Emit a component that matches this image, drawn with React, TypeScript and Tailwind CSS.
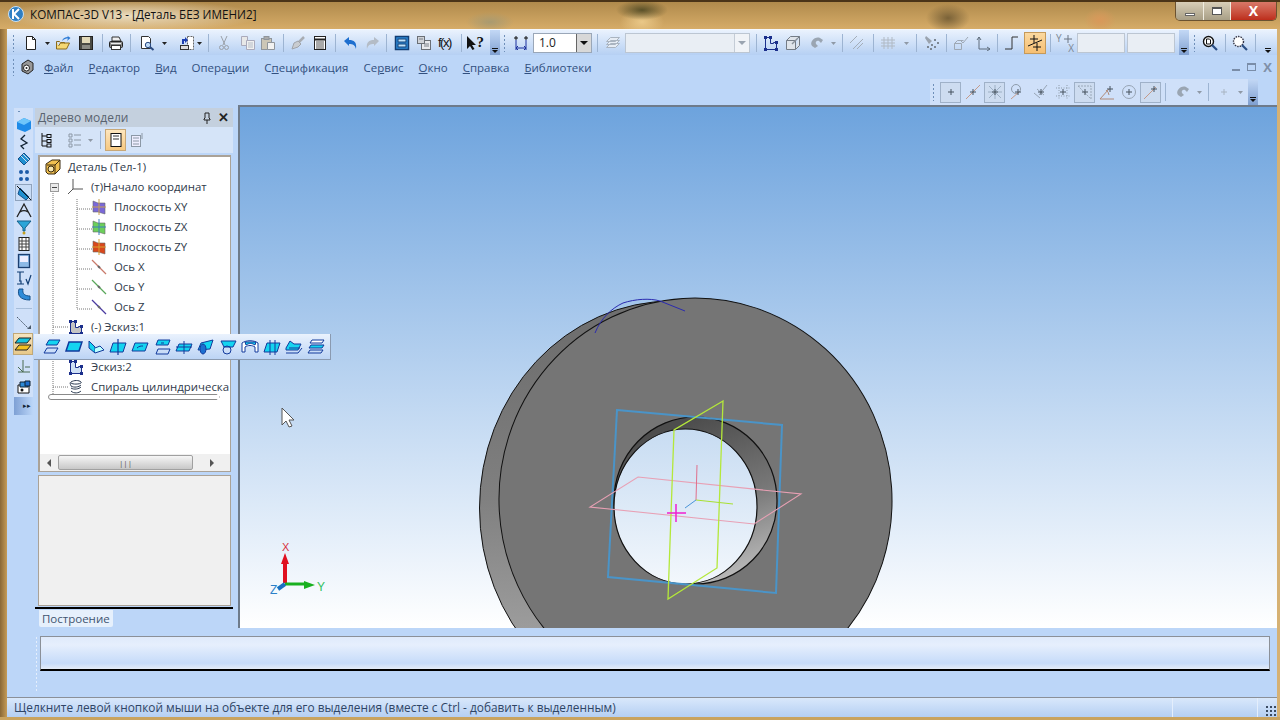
import React from 'react';

const font = { fontFamily: '"Open Sans", "Liberation Sans", sans-serif' };

const S = ({ className = '', w = 16, h = 16, children }: { className?: string; w?: number; h?: number; children?: React.ReactNode }) => (
  <svg width={w} height={h} viewBox={`0 0 ${w} ${h}`} className={`shrink-0 ${className}`} fill="none">
    {children}
  </svg>
);

type P = { className?: string };

const Grip = ({ className = '' }: P) => (
  <div className={`w-[3px] h-[18px] shrink-0 bg-[radial-gradient(circle,#6f8fb8_1px,transparent_1px)] bg-[length:3px_4px] ${className}`} />
);
const Sep = ({ className = '' }: P) => <div className={`w-px h-[18px] shrink-0 bg-[#9db4d2] ${className}`} />;
const Dd = ({ className = '', gray = false }: P & { gray?: boolean }) => (
  <S w={5} h={16} className={className}>
    <path d="M0 7h5L2.5 10z" fill={gray ? '#8f99a6' : '#222'} />
  </S>
);
const Chev = ({ className = '' }: P) => (
  <div className={`w-[10px] h-[26px] shrink-0 flex flex-col items-center justify-end pb-[3px] bg-gradient-to-b from-[#c3d8f5] to-[#7f9fd0] ${className}`}>
    <div className="w-[6px] h-px bg-[#111] mb-px" />
    <div className="w-0 h-0 border-x-[3px] border-x-transparent border-t-[3px] border-t-[#111]" />
  </div>
);

const NewDoc = ({ className }: P) => (
  <S className={className}>
    <path d="M3.5 1.5h6l3 3v10h-9z" fill="#fff" stroke="#222" />
    <path d="M9.5 1.5v3h3" stroke="#222" />
  </S>
);
const OpenIco = ({ className }: P) => (
  <S className={className}>
    <path d="M1.5 6.5v7.500h10l3-6h-9l-2 3" fill="#f5d873" stroke="#8a6a1c" />
    <path d="M1.5 6.5h3l1 1h4v1" fill="#e8c050" stroke="#8a6a1c" />
    <path d="M7 6c1-3 3-4 6-4l-1-1.500 3.500 2.500-3.500 3 1-2.500c-2 0-4 .5-6 2.500z" fill="#2c7bd6" />
  </S>
);
const SaveIco = ({ className }: P) => (
  <S className={className}>
    <rect x="1.500" y="1.500" width="13" height="13" fill="#4a4a44" stroke="#222" />
    <rect x="4" y="2" width="8" height="6" fill="#e2d9b8" />
    <rect x="4" y="10" width="8" height="4" fill="#8a8a84" />
  </S>
);
const PrintIco = ({ className }: P) => (
  <S className={className}>
    <path d="M4 2h7l2 4H4z" fill="#eee" stroke="#333" />
    <rect x="1.500" y="6.500" width="13" height="6" rx="1" fill="#888" stroke="#222" />
    <rect x="3.500" y="10.500" width="9" height="4" fill="#fff" stroke="#333" />
    <path d="M3 8.500h10" stroke="#eee" />
  </S>
);
const PreviewIco = ({ className }: P) => (
  <S className={className}>
    <path d="M2.500 1.500h7l2 2v10h-9z" fill="#fff" stroke="#333" />
    <circle cx="9" cy="10" r="2.700" fill="#bcd8f5" stroke="#2a4a80" />
    <path d="M11 12l3.500 3" stroke="#2a4a80" strokeWidth="2" />
  </S>
);
const PageIco = ({ className }: P) => (
  <S className={className}>
    <path d="M8.500 1.500h6v13h-6z" fill="#fff" stroke="#666" strokeDasharray="2 1" />
    <rect x="1.500" y="10.500" width="8" height="4" fill="#ddd" stroke="#333" />
    <path d="M3 9V4h3V2l3 3-3 3V6H5v3z" fill="#1d3fb0" />
  </S>
);
const CutIco = ({ className }: P) => (
  <S className={className}>
    <path d="M5 1l4 9M11 1l-4 9" stroke="#9aa0a8" />
    <circle cx="5.500" cy="12.500" r="2" stroke="#9aa0a8" />
    <circle cx="10.500" cy="12.500" r="2" stroke="#9aa0a8" />
  </S>
);
const CopyIco = ({ className }: P) => (
  <S className={className}>
    <path d="M1.500 1.500h6v9h-6z" fill="#e8e8e8" stroke="#aab" />
    <path d="M6.500 5.500h8v9h-8z" fill="#f0f0f0" stroke="#aab" />
    <path d="M8 8h5M8 10h5M8 12h5" stroke="#b5bcc6" />
  </S>
);
const PasteIco = ({ className }: P) => (
  <S className={className}>
    <rect x="1.500" y="3.500" width="10" height="11" fill="#ccc6b6" stroke="#8f959c" />
    <rect x="4" y="1.500" width="5" height="3" fill="#aaa" stroke="#8f959c" />
    <path d="M7.500 7.500h7v7h-7z" fill="#f2f2f2" stroke="#8f959c" />
  </S>
);
const BrushIco = ({ className }: P) => (
  <S className={className}>
    <path d="M14 2L8 8" stroke="#a9adb3" strokeWidth="2.500" />
    <path d="M8 6l3 3-3 3-6 2 2-6z" fill="#c9ccd0" stroke="#a0a4aa" />
  </S>
);
const TableIco = ({ className }: P) => (
  <S className={className}>
    <rect x="2.500" y="1.500" width="11" height="13" fill="#fff" stroke="#222" />
    <path d="M2.500 4.500h11" stroke="#222" strokeWidth="2" />
    <path d="M4 7h8M4 9h8M4 11h8M4 13h8" stroke="#555" />
  </S>
);
const UndoIco = ({ className, c = '#1e6fcf' }: P & { c?: string }) => (
  <S className={className}>
    <path d="M1 6l5-4v3c5 0 8 2 7 9-1-4-3-5-7-5v2z" fill={c} />
  </S>
);
const RedoIco = ({ className }: P) => (
  <S className={className}>
    <path d="M15 6l-5-4v3C5 5 2 7 3 14c1-4 3-5 7-5v2z" fill="#b4bcc6" />
  </S>
);
const BlueDoc = ({ className }: P) => (
  <S className={className}>
    <rect x="1.500" y="1.500" width="13" height="13" fill="#2e8bd8" stroke="#123e74" strokeWidth="1.500" />
    <rect x="4" y="4" width="8" height="3" fill="#bfe2fa" stroke="#123e74" />
    <rect x="4" y="9" width="8" height="3" fill="#bfe2fa" stroke="#123e74" />
  </S>
);
const GrayDoc = ({ className }: P) => (
  <S className={className}>
    <rect x="5.500" y="5.500" width="9" height="9" fill="#e8eaee" stroke="#6a6f76" />
    <rect x="1.500" y="1.500" width="7" height="7" fill="#d0d3d8" stroke="#6a6f76" />
    <path d="M3 4h4M8 9h5M8 11h5" stroke="#7b8088" />
  </S>
);
const HelpIco = ({ className }: P) => (
  <div className={`relative w-[18px] h-4 shrink-0 ${className}`}>
    <S className="absolute left-0 top-0">
      <path d="M1 1v13l3-3 2.500 4 2-1-2.500-4h4z" fill="#111" />
    </S>
    <span className="absolute right-0 -top-[3px] text-[15px] font-bold text-[#111] leading-[20px]" style={{ fontFamily: '"Liberation Serif", serif' }}>?</span>
  </div>
);
const DimIco = ({ className }: P) => (
  <S className={className}>
    <path d="M3 1v4M1 3h4M13 1v4M11 3h4" stroke="#111" />
    <path d="M3 5v10M13 5v10" stroke="#1a2f9c" />
    <path d="M3 13h10M3 13l2-2M3 13l2 2M13 13l-2-2M13 13l-2 2" stroke="#1a2f9c" />
  </S>
);
const LayersIco = ({ className }: P) => (
  <S className={className}>
    <path d="M1.500 6.500l4-4h9l-4 4z M1.500 9.500l4-4h9l-4 4z M1.500 12.500l4-4h9l-4 4z" stroke="#aab4c0" fill="#e6ecf4" />
  </S>
);
const SketchIco = ({ className, fill = 'none' }: P & { fill?: string }) => (
  <S className={className}>
    <path d="M2.500 2.500h5v6h3v-1h3v7h-11z" fill={fill} stroke="#1b2f8c" />
    <g fill="#1b2f8c">
      <rect x="1" y="1" width="3" height="3" /><rect x="6" y="1" width="3" height="3" /><rect x="12" y="6" width="3" height="3" />
      <rect x="1" y="13" width="3" height="3" /><rect x="12" y="13" width="3" height="3" />
    </g>
  </S>
);
const BoxIco = ({ className }: P) => (
  <S className={className}>
    <path d="M1.500 5.500h9v9h-9zM1.500 5.500l4-4h9l-4 4M14.500 1.500v9l-4 4" stroke="#747c86" fill="#dfe4ea" />
    <path d="M7 9l6-6" stroke="#8a929c" strokeWidth="1.500" />
  </S>
);
const MagnetIco = ({ className }: P) => (
  <S className={className}>
    <path d="M3 11c-3-4 3-10 8-8l3 2-2 3-2-2c-2-1-4 1-3 3l2 2-3 2z" fill="#9aa5b2" />
  </S>
);
const ParallelIco = ({ className }: P) => (
  <S className={className}>
    <path d="M1 8l7-7M4 14l10-10M8 14l6-6" stroke="#a4adb8" />
  </S>
);
const GridIco = ({ className }: P) => (
  <S className={className}>
    <path d="M4 2v12M8 2v12M12 2v12M1 5h14M1 8h14M1 11h14" stroke="#b0b9c4" />
  </S>
);
const SnapGray = ({ className }: P) => (
  <S className={className}>
    <path d="M2 1l6 5-3 3-4-6z" fill="#9aa3ae" />
    <g fill="#7d8792"><rect x="10" y="4" width="2" height="2" /><rect x="13" y="7" width="2" height="2" /><rect x="7" y="9" width="2" height="2" /><rect x="10" y="11" width="2" height="2" /><rect x="3" y="11" width="2" height="2" /><rect x="6" y="13" width="2" height="2" /></g>
  </S>
);
const CubeCheck = ({ className }: P) => (
  <S className={className}>
    <path d="M1.500 8.500h7v6h-7zM1.500 8.500l3-3h6" stroke="#9ea8b4" />
    <path d="M8 6l2 2 5-6" stroke="#9ea8b4" />
  </S>
);
const AxisIco = ({ className }: P) => (
  <S className={className}>
    <path d="M4 14V2M4 2L2 5M4 2l2 3M4 14h11M15 14l-3-2M15 14l-3 2" stroke="#5f6d7c" />
  </S>
);
const StepIco = ({ className }: P) => (
  <S className={className}>
    <path d="M1 14h7V2h6" stroke="#333" />
  </S>
);
const Cross = ({ x, y, c = '#111', r = 3 }: { x: number; y: number; c?: string; r?: number }) => (
  <path d={`M${x} ${y - r - 1}v${2 * r + 2}M${x - r - 1} ${y}h${2 * r + 2}`} stroke={c} />
);
const SelSnap = ({ className }: P) => (
  <div className={`w-[22px] h-[22px] shrink-0 flex items-center justify-center border border-[#c59a5a] bg-gradient-to-b from-[#fbd9a0] to-[#f6bf72] ${className}`}>
    <S>
      <path d="M1 11l14-6" stroke="#111" />
      <Cross x={7} y={4} /><Cross x={10} y={12} />
    </S>
  </div>
);
const YX = ({ className }: P) => (
  <div className={`relative w-[18px] h-5 shrink-0 text-[10px] leading-[10px] text-[#7b8794] ${className}`}>
    <span className="absolute left-0 top-0">Y</span>
    <span className="absolute right-0 top-[10px]">X</span>
    <S className="absolute left-[2px] top-0"><Cross x={10} y={6} c="#6a7482" /></S>
  </div>
);
const ZoomIco = ({ className, dash = false }: P & { dash?: boolean }) => (
  <S className={className}>
    <circle cx="6.500" cy="6.500" r="5" fill="#fff" stroke={dash ? '#334' : '#111'} strokeDasharray={dash ? '1.500 1' : undefined} strokeWidth="1.400" />
    {!dash && <path d="M4.500 4h3l1 1v4h-4z" stroke="#111" />}
    <path d="M10 10l5 5" stroke="#2a4f86" strokeWidth="2.200" />
  </S>
);

// snap toolbar drawings
const Snap = ({ kind, className }: P & { kind: number }) => (
  <S className={className}>
    {kind === 1 && <path d="M1 15L15 1" stroke="#c49a88" />}
    {kind === 2 && <path d="M2 2l12 12M14 2L2 14M1 8h14M8 1v14" stroke="#9db0c4" />}
    {kind === 3 && <><circle cx="6" cy="5" r="4.500" stroke="#8e9baa" /><path d="M1 15l8-7" stroke="#c49a88" /></>}
    {kind === 4 && <path d="M1 9l6 5M4 5l7 6M14 1L6 11" stroke="#97a4b4" />}
    {kind === 5 && <path d="M1 4h14M1 12h14M4 1v14M12 1v14" stroke="#8f9cab" strokeDasharray="1 1.500" />}
    {kind === 6 && <path d="M1 2h13v13M1 2l13 13" stroke="#9aa8b8" strokeDasharray="2 1" />}
    {kind === 7 && <path d="M1 15h14M1 15l9-10M10 11a7 7 0 0 0-3-5" stroke="#b08a78" />}
    {kind === 8 && <circle cx="8" cy="8" r="6.500" stroke="#97a4b4" />}
    {kind === 9 && <path d="M1 15L13 3" stroke="#c49a88" />}
    <Cross x={kind === 7 || kind === 9 ? 11 : 8} y={kind === 7 || kind === 9 ? 5 : 8} c="#46525f" r={2} />
  </S>
);
const SnapBtn = ({ kind, on = false, className = '' }: P & { kind: number; on?: boolean }) => (
  <div className={`w-[21px] h-[21px] shrink-0 flex items-center justify-center border ${on ? 'border-[#9fb1c8] bg-[#cddcf0]' : 'border-transparent'} ${className}`}>
    <Snap kind={kind} />
  </div>
);

// plane icons of the flyout
const Plane = ({ v }: { v: number }) => {
  const o = '#123a9c';
  const c = '#14d4f0';
  const shapes: Record<number, React.ReactNode> = {
    0: <><path d="M3 7l3-5h11l-3 5z" fill={c} stroke={o} /><path d="M1 15l3-5h11l-3 5z" stroke={o} /></>,
    1: <path d="M1 13l3-9h13l-3 9z" fill={c} stroke={o} strokeWidth="1.500" />,
    2: <><path d="M2 3l6 6v6l-6-5z" fill={c} stroke={o} /><path d="M8 15l9-3-4-4-5 2" fill="#bff" stroke={o} /></>,
    3: <><path d="M1 14l3-9h13l-3 9z" fill={c} stroke={o} /><path d="M9 1v16" stroke={o} strokeWidth="1.200" /></>,
    4: <path d="M1 13l3-8h13l-3 8z M6 10c2-2 4-2 6-2" fill={c} stroke={o} />,
    5: <><path d="M3 7l2-5h12l-2 5z" fill={c} stroke={o} /><path d="M3 16l2-5h12l-2 5z M8 5h3" stroke={o} /></>,
    6: <><path d="M1 13l3-7h13l-3 7z" fill={c} stroke={o} /><path d="M1 9h16M9 3v13" stroke={o} /></>,
    7: <><path d="M1 12l3-7 12-3-3 9z" fill={c} stroke={o} /><ellipse cx="6" cy="11" rx="3" ry="5" fill="#1c6fd0" stroke={o} /></>,
    8: <><path d="M2 3h15l-3 6H5z" fill={c} stroke={o} /><circle cx="8" cy="12" r="4" stroke={o} /></>,
    9: <><path d="M1 14V5c4-3 12-3 16 0v9h-3V9c-3-2-7-2-10 0v5z" stroke={o} fill="#fff" /><path d="M5 7c3-2 6-2 9 0l1-3H4z" fill={c} stroke={o} /></>,
    10: <><path d="M1 14l3-9h13l-3 9z" fill={c} stroke={o} /><path d="M7 2v15M12 2v15" stroke={o} /></>,
    11: <><path d="M1 10l4-7 4 3 7 0-3 6H1z" fill={c} stroke={o} /><path d="M1 15h12l4-5" stroke={o} /><path d="M4 10h11" stroke={o} /></>,
    12: <><path d="M3 5l2-3h12l-2 3z" fill="#fff" stroke={o} /><path d="M2 10l2-3h13l-2 3z" fill={c} stroke={o} /><path d="M1 15l2-3h13l-2 3z" stroke={o} /></>,
  };
  return <S w={18} h={18} className="shrink-0 mx-[2px]">{shapes[v]}</S>;
};

// left vertical bar drawings
const Cube = () => (
  <S>
    <path d="M1 5l7-4 7 3v8l-6 3-8-3z" fill="#1e8be8" />
    <path d="M1 5l7 3 7-4-7-3z" fill="#6fc6fa" />
  </S>
);
const Side = ({ n }: { n: number }) => (
  <S>
    {n === 1 && <path d="M9 1L5 5l6 4-6 3 3 3" stroke="#123" strokeWidth="1.300" />}
    {n === 2 && <><path d="M2 8l6-6 6 6-6 6z" fill="#1e8fd0" stroke="#14508a" /><path d="M5 5l6 6M7 3l6 6" stroke="#cde" /></>}
    {n === 3 && <g fill="#1d5ba8"><circle cx="5" cy="4" r="2" /><circle cx="11" cy="4" r="2" /><circle cx="5" cy="11" r="2" /><circle cx="11" cy="11" r="2" /></g>}
    {n === 4 && <><path d="M4 3l9 9-3 3-8-6z" fill="#1e8fd0" stroke="#14508a" /><path d="M1 1l14 14" stroke="#111" /></>}
    {n === 5 && <path d="M1 15L8 2l7 13M4 10c3-2 5-2 8 0" stroke="#222" strokeWidth="1.300" />}
    {n === 6 && <><path d="M1 2h14L9 9v3H7V9z" fill="#2aa5d8" stroke="#14608a" /><circle cx="8" cy="14" r="1.500" fill="#c4a020" /></>}
    {n === 7 && <><rect x="3" y="1.500" width="10" height="13" fill="#fff" stroke="#222" /><path d="M3 5h10M3 8h10M3 11h10M6 2v12M10 2v12" stroke="#444" /></>}
    {n === 8 && <><rect x="2.500" y="1.500" width="11" height="13" fill="#8db9e6" stroke="#1c3f70" strokeWidth="1.300" /><rect x="4" y="3" width="8" height="6" fill="#eef" /></>}
    {n === 9 && <path d="M1 2h7M4 2v9M1 14h7M3 11h2v3M10 9l2 5 3-9" stroke="#123e74" strokeWidth="1.200" />}
    {n === 10 && <path d="M3 2c-2 6 1 11 11 11v-4C9 9 6 7 7 2z" fill="#2e8bd8" stroke="#14508a" />}
    {n === 11 && <><path d="M1 2l12 12" stroke="#4a5a6c" strokeDasharray="2 1" /><path d="M11 14h4v-4z" fill="#4a5a6c" /></>}
    {n === 12 && <path d="M7 2v12M2 14h12M7 14L2 9M9 9h5" stroke="#4a6a50" />}
    {n === 13 && <><path d="M2 6h11v8H2z" fill="#fff" stroke="#111" /><path d="M4 3h8v5H4z" fill="#2e8bd8" stroke="#123" /><path d="M9 2h5v5H9z" fill="#1e6fcf" stroke="#123" /><circle cx="6" cy="11" r="1.500" fill="#111" /></>}
  </S>
);

const tree = [
  { t: 'Плоскость XY', c: ['#7a68d8', '#c8a050'] },
  { t: 'Плоскость ZX', c: ['#6ccf5a', '#3a7fc0'] },
  { t: 'Плоскость ZY', c: ['#d8481c', '#d8a030'] },
];

const PlaneNode = ({ c }: { c: string[] }) => (
  <S>
    <path d="M2 2l5 2h7v11l-7-2H2z" fill={c[0]} stroke="#6a6a6a" strokeWidth=".6" />
    <path d="M1 8h14" stroke={c[1]} />
    <path d="M8 0v16" stroke={c[1]} />
  </S>
);
const AxisNode = ({ c }: { c: string }) => (
  <S>
    <path d="M1 1l14 14" stroke={c} strokeWidth="1.300" />
    <path d="M7 7l2 2" stroke="#666" strokeWidth="2" />
  </S>
);

const Row = ({ pl, icon, children }: { pl: string; icon: React.ReactNode; children?: React.ReactNode }) => (
  <div className={`h-5 flex items-center gap-[7px] whitespace-nowrap ${pl}`}>
    {icon}
    <span className="text-[11.4px] text-[#2f3a4a] leading-5">{children}</span>
  </div>
);

const Menu = ({ className = '', children }: P & { children?: React.ReactNode }) => (
  <span className={`text-[11.5px] text-[#32507f] whitespace-nowrap ${className}`}>{children}</span>
);
const U = ({ children }: { children?: React.ReactNode }) => <span className="underline">{children}</span>;

export default function App() {
  return (
    <div className="w-[1280px] h-[720px] overflow-hidden flex flex-col bg-[#bcd6f8]" style={font}>
      {/* title bar */}
      <div className="h-[29px] shrink-0 flex items-start border-t-2 border-[#4a3418] bg-[radial-gradient(ellipse_26px_10px_at_642px_8px,#5a5028,transparent),radial-gradient(ellipse_22px_14px_at_948px_16px,#7a6238,transparent),radial-gradient(ellipse_16px_12px_at_1100px_18px,#d9985a,transparent),radial-gradient(ellipse_130px_16px_at_130px_14px,#eadcc0,transparent),radial-gradient(ellipse_24px_10px_at_490px_20px,#a99a70,transparent),radial-gradient(ellipse_22px_14px_at_642px_20px,#eac888,transparent),linear-gradient(180deg,#b08a4c,#d6ac68)]">
        <S w={16} h={16} className="ml-[8px] mt-[4px]">
          <circle cx="8" cy="8" r="7.500" fill="#2f7fc4" stroke="#c8e0f4" />
          <path d="M5 3v10M11 3L6 8l5 5" stroke="#fff" strokeWidth="2" />
        </S>
        <span className="ml-[6px] mt-[4px] text-[11.7px] leading-[16px] text-[#111] whitespace-nowrap">КОМПАС-3D V13 - [Деталь БЕЗ ИМЕНИ2]</span>
        <div className="ml-auto mr-[3px] flex h-[19px] rounded-b-[5px] border border-t-0 border-[#6b5230] overflow-hidden">
          <div className="w-[28px] flex items-center justify-center bg-gradient-to-b from-[#d8ceb8] to-[#a89f86] border-r border-[#f0ece0]">
            <div className="w-[10px] h-[3px] mt-[6px] bg-white border border-[#666]" />
          </div>
          <div className="w-[27px] flex items-center justify-center bg-gradient-to-b from-[#d8ceb8] to-[#a89f86] border-r border-[#f0ece0]">
            <div className="w-[10px] h-[8px] bg-white border border-t-2 border-[#555]" />
          </div>
          <div className="w-[45px] flex items-center justify-center bg-gradient-to-b from-[#d87868] to-[#bd2c1a] text-white text-[14px] font-bold leading-none">X</div>
        </div>
      </div>

      <div className="flex-1 flex min-h-0">
        <div className="w-[7px] shrink-0 bg-gradient-to-r from-[#8a6836] to-[#c59c58]" />
        <div className="flex-1 min-w-0 flex flex-col">
          {/* standard toolbar */}
          <div className="h-[26px] shrink-0 flex items-center overflow-hidden border-t border-[#f4f8fe] bg-gradient-to-b from-[#eaf2fd] to-[#b6d0f3]">
            <Grip className="ml-[5px]" />
            <NewDoc className="ml-[8px]" />
            <Dd className="ml-[6px]" />
            <OpenIco className="ml-[5px]" />
            <SaveIco className="ml-[7px]" />
            <Sep className="ml-[8px]" />
            <PrintIco className="ml-[5px]" />
            <Sep className="ml-[6px]" />
            <PreviewIco className="ml-[8px]" />
            <Dd className="ml-[7px]" />
            <PageIco className="ml-[12px]" />
            <Dd className="ml-[2px]" />
            <Sep className="ml-[6px]" />
            <CutIco className="ml-[7px]" />
            <CopyIco className="ml-[8px]" />
            <PasteIco className="ml-[4px]" />
            <Sep className="ml-[7px]" />
            <BrushIco className="ml-[6px]" />
            <TableIco className="ml-[6px]" />
            <Sep className="ml-[7px]" />
            <UndoIco className="ml-[7px]" />
            <RedoIco className="ml-[5px]" />
            <Sep className="ml-[6px]" />
            <BlueDoc className="ml-[7px]" />
            <GrayDoc className="ml-[6px]" />
            <span className="ml-[6px] w-4 shrink-0 text-[13px] text-[#111] tracking-[-1.5px] leading-4" style={{ fontFamily: '"Liberation Sans", sans-serif' }}>f(x)</span>
            <Sep className="ml-[7px]" />
            <HelpIco className="ml-[4px]" />
            <Chev className="ml-[6px]" />
            <Grip className="ml-[3px]" />
            <DimIco className="ml-[7px]" />
            <div className="ml-[4px] w-[59px] h-[20px] shrink-0 flex items-center justify-between bg-white border border-[#9aa7b8] text-[12px] text-[#222] pl-[5px]">
              1.0
              <div className="w-[15px] h-full flex items-center justify-center bg-[#d8d8d8] border-l border-[#666]">
                <div className="w-0 h-0 border-x-[4px] border-x-transparent border-t-[4px] border-t-[#111]" />
              </div>
            </div>
            <Sep className="ml-[5px]" />
            <LayersIco className="ml-[7px]" />
            <div className="ml-[4px] w-[125px] h-[20px] shrink-0 flex justify-end bg-[#e9eef4] border border-[#bcc6d2]">
              <div className="w-[15px] h-full flex items-center justify-center border-l border-[#c4ccd6] bg-[#f0f3f7]">
                <div className="w-0 h-0 border-x-[4px] border-x-transparent border-t-[4px] border-t-[#9aa4b0]" />
              </div>
            </div>
            <Sep className="ml-[6px]" />
            <SketchIco className="ml-[6px]" />
            <BoxIco className="ml-[6px]" />
            <MagnetIco className="ml-[8px]" />
            <Dd gray className="ml-[6px]" />
            <Sep className="ml-[6px]" />
            <ParallelIco className="ml-[6px]" />
            <Sep className="ml-[8px]" />
            <GridIco className="ml-[6px]" />
            <Dd gray className="ml-[8px]" />
            <Sep className="ml-[7px]" />
            <SnapGray className="ml-[7px]" />
            <Sep className="ml-[6px]" />
            <CubeCheck className="ml-[6px]" />
            <AxisIco className="ml-[6px]" />
            <Sep className="ml-[6px]" />
            <StepIco className="ml-[6px]" />
            <SelSnap className="ml-[4px]" />
            <Sep className="ml-[4px]" />
            <YX className="ml-[5px]" />
            <div className="ml-[3px] w-[48px] h-[20px] shrink-0 bg-[#e9eef4] border border-[#bcc6d2]" />
            <div className="ml-[2px] w-[48px] h-[20px] shrink-0 bg-[#e9eef4] border border-[#bcc6d2]" />
            <Chev className="ml-[4px]" />
            <Grip className="ml-[4px]" />
            <ZoomIco className="ml-[6px]" />
            <Sep className="ml-[7px]" />
            <ZoomIco dash className="ml-[6px]" />
            <Sep className="ml-[7px]" />
            <div className="ml-[8px] w-[8px] h-[26px] shrink-0 flex flex-col items-center justify-end pb-[3px]">
              <div className="w-[6px] h-px bg-[#111] mb-px" />
              <div className="w-0 h-0 border-x-[3px] border-x-transparent border-t-[3px] border-t-[#111]" />
            </div>
          </div>

          {/* menu + snap bar */}
          <div className="h-[50px] shrink-0 flex flex-col bg-[#bcd6f8]">
            <div className="h-6 flex items-center relative">
              <Grip className="ml-[5px] h-[16px]" />
              <S className="ml-[4px]">
                <path d="M3 5l6-4 5 3v7l-5 4-6-3z" fill="#999" stroke="#222" />
                <circle cx="7.500" cy="9" r="3" fill="#fff" stroke="#222" />
                <circle cx="7.500" cy="9" r="1" fill="#222" />
              </S>
              <Menu className="ml-[9px] mt-[1px]"><U>Ф</U>айл</Menu>
              <Menu className="ml-[15px] mt-[1px]"><U>Р</U>едактор</Menu>
              <Menu className="ml-[15px] mt-[1px]"><U>В</U>ид</Menu>
              <Menu className="ml-[15px] mt-[1px]">Опера<U>ц</U>ии</Menu>
              <Menu className="ml-[15px] mt-[1px]">С<U>п</U>ецификация</Menu>
              <Menu className="ml-[15px] mt-[1px]">Се<U>р</U>вис</Menu>
              <Menu className="ml-[15px] mt-[1px]"><U>О</U>кно</Menu>
              <Menu className="ml-[15px] mt-[1px]"><U>С</U>правка</Menu>
              <Menu className="ml-[15px] mt-[1px]"><U>Б</U>иблиотеки</Menu>
              <div className="ml-auto mr-[5px] flex items-center gap-[7px]">
                <div className="w-[8px] h-[2px] mt-[6px] bg-[#7a8da8]" />
                <div className="w-[9px] h-[8px] border border-t-2 border-[#7a8da8]" />
                <span className="text-[13px] font-bold leading-none text-[#8090a8]">X</span>
              </div>
            </div>
            <div className="h-[26px] flex justify-end">
              <div className="mr-[19px] w-[328px] flex items-center bg-[#cfe0f9]">
                <Grip className="ml-[2px]" />
                <SnapBtn on kind={0} className="ml-[5px]" />
                <SnapBtn kind={1} className="ml-[1px]" />
                <SnapBtn on kind={2} className="ml-[1px]" />
                <SnapBtn kind={3} className="ml-[2px]" />
                <SnapBtn kind={4} className="ml-[2px]" />
                <SnapBtn kind={5} className="ml-[1px]" />
                <SnapBtn on kind={6} className="ml-[1px]" />
                <SnapBtn kind={7} className="ml-[1px]" />
                <SnapBtn kind={8} className="ml-[1px]" />
                <SnapBtn on kind={9} className="ml-[1px]" />
                <Sep className="ml-[4px]" />
                <MagnetIco className="ml-[9px]" />
                <Dd gray className="ml-[6px]" />
                <Sep className="ml-[6px]" />
                <S className="ml-[7px]"><Cross x={8} y={8} c="#a8b4c2" r={2} /></S>
                <Dd gray className="ml-[6px]" />
                <Chev className="ml-[5px]" />
              </div>
            </div>
          </div>

          {/* workspace */}
          <div className="h-[523px] shrink-0 flex relative">
            <div className="w-[28px] shrink-0 pt-[3px] pl-[7px]">
              <div className="w-[19px] h-[307px] flex flex-col items-center bg-[#cfe0f9]">
                <div className="h-[8px] w-[14px] shrink-0 bg-[radial-gradient(circle,#6f8fb8_1px,transparent_1px)] bg-[length:4px_3px] bg-no-repeat bg-[position:0_2px]" />
                <div className="h-[17px] flex items-center"><Cube /></div>
                {[1, 2, 3, 4, 5, 6, 7, 8, 9, 10].map((n) => (
                  <div key={n} className={`h-[17px] w-[17px] shrink-0 flex items-center justify-center ${n === 4 ? 'border border-[#8fa3bd] bg-[#c8dcf6]' : ''}`}>
                    <Side n={n} />
                  </div>
                ))}
                <div className="w-[16px] h-px my-[5px] bg-[#a5bcd9]" />
                <div className="h-[17px] flex items-center"><Side n={11} /></div>
                <div className="h-[22px] w-[20px] shrink-0 mt-[2px] -ml-[2px] flex items-center justify-center border border-[#c0a878] bg-gradient-to-b from-[#f6e5c0] to-[#e8c888]">
                  <svg width="18" height="16" viewBox="0 0 18 16" fill="none">
                    <path d="M1 7l4-5h12l-4 5z" fill="#14c4e0" stroke="#222" />
                    <path d="M1 14l4-5h12l-4 5z" fill="#f2c020" stroke="#222" />
                  </svg>
                </div>
                <div className="h-[22px] flex items-center"><Side n={12} /></div>
                <div className="h-[20px] flex items-center"><Side n={13} /></div>
                <div className="w-full flex-1 bg-gradient-to-r from-[#7ea0d4] to-[#bcd6f8] flex items-center justify-end pr-[2px] text-[7px] text-[#123]">▸▸</div>
              </div>
            </div>

            {/* model tree panel */}
            <div className="w-[198px] shrink-0 pt-[3px] flex flex-col">
              <div className="h-[19px] shrink-0 flex items-center bg-[#c4d0de] pl-[3px] pr-[4px]">
                <span className="text-[12px] text-[#59636f]">Дерево модели</span>
                <S w={10} h={12} className="ml-auto">
                  <path d="M3 1h4v5l1 1v1H2V7l1-1zM5 8v4" stroke="#222" />
                </S>
                <span className="ml-[6px] text-[13px] leading-none font-bold text-[#222]">✕</span>
              </div>
              <div className="h-[26px] shrink-0 flex items-center bg-[#d5e4f8]">
                <S className="ml-[4px]">
                  <path d="M3 1v13M3 4h5M3 9h5M3 14h5" stroke="#111" />
                  <rect x="8" y="2.500" width="4" height="3" stroke="#111" /><rect x="8" y="7.500" width="4" height="3" stroke="#111" /><rect x="8" y="12" width="4" height="3" stroke="#111" />
                </S>
                <S className="ml-[12px]">
                  <path d="M2 2h3v3H2zM2 7h3v3H2zM2 12h3v3H2zM7 3h7M7 8h7M7 13h7" stroke="#8c98a6" />
                </S>
                <Dd gray className="ml-[5px]" />
                <Sep className="ml-[7px]" />
                <div className="ml-[4px] w-[21px] h-[22px] flex items-center justify-center border border-[#c8a878] bg-gradient-to-b from-[#fde6be] to-[#f6c880]">
                  <S>
                    <rect x="3" y="1.500" width="10" height="13" fill="#fff" stroke="#111" />
                    <path d="M5 4h6M5 7h6" stroke="#333" />
                  </S>
                </div>
                <S className="ml-[4px]">
                  <rect x="1.500" y="3.500" width="9" height="11" fill="#eef" stroke="#8c98a6" />
                  <path d="M3 6h6M3 9h6M3 12h6M12 1v6" stroke="#8c98a6" />
                </S>
              </div>
              <div className="h-[317px] shrink-0 ml-[3px] w-[193px] mt-[2px] flex flex-col bg-white border-2 border-[#aaa297] border-r border-b relative overflow-hidden">
                <svg width="193" height="260" viewBox="0 0 193 260" className="absolute left-0 top-0" fill="none">
                  <path d="M13 36v202M13 170h15M13 230h15M37 42v110M37 52h15M37 72h15M37 92h15M37 112h15M37 132h15M37 152h15" stroke="#777" strokeDasharray="1 1" />
                </svg>
                <div className="flex flex-col relative">
                  <Row pl="pl-[5px]" icon={
                    <S>
                      <path d="M1 5l6-4h8v9l-5 5H3l-2-2z" fill="#f0c050" stroke="#3a2a10" />
                      <path d="M10 15V6l5-5M10 6H2" stroke="#3a2a10" />
                      <circle cx="6" cy="10" r="3" fill="#f8e8b0" stroke="#3a2a10" />
                    </S>
                  }>Деталь (Тел-1)</Row>
                  <div className="h-5 flex items-center relative">
                    <div className="ml-[10px] w-[9px] h-[9px] shrink-0 bg-[#eaeaea] border border-[#9a9a9a] flex items-center justify-center">
                      <div className="w-[5px] h-px bg-[#444]" />
                    </div>
                    <S className="ml-[8px]"><path d="M6 0v10M6 10h10M6 10l-5 5" stroke="#555" /></S>
                    <span className="ml-[8px] text-[11.4px] text-[#2f3a4a] whitespace-nowrap">(т)Начало координат</span>
                  </div>
                  {tree.map((p) => (
                    <Row key={p.t} pl="pl-[51px]" icon={<PlaneNode c={p.c} />}>{p.t}</Row>
                  ))}
                  <Row pl="pl-[51px]" icon={<AxisNode c="#c97a6a" />}>Ось X</Row>
                  <Row pl="pl-[51px]" icon={<AxisNode c="#5aa85a" />}>Ось Y</Row>
                  <Row pl="pl-[51px]" icon={<AxisNode c="#4a3aa0" />}>Ось Z</Row>
                  <Row pl="pl-[28px]" icon={<SketchIco fill="#c4c4c4" />}>(-) Эскиз:1</Row>
                  <div className="h-5" />
                  <Row pl="pl-[28px]" icon={<SketchIco fill="#cfe0f5" />}>Эскиз:2</Row>
                  <Row pl="pl-[28px]" icon={
                    <S>
                      <path d="M3 3c3-2 8-2 10 0s-8 3-10 1 0 3 0 3c3 2 8 1 10-1M3 9c3 2 8 1 10-1M3 12c3 3 8 2 10 0" stroke="#2a3a50" />
                    </S>
                  }>Спираль цилиндрическа</Row>
                </div>
                <div className="ml-[8px] w-[172px] h-[6px] shrink-0 -mt-[3px] relative bg-white border border-[#8a8a8a] rounded-l-[3px] [clip-path:polygon(0_0,98%_0,100%_50%,98%_100%,0_100%)]" />
                <div className="mt-auto h-[17px] shrink-0 flex items-center bg-[#f0f0f0]">
                  <div className="w-[18px] flex justify-center">
                    <div className="w-0 h-0 border-y-[4px] border-y-transparent border-r-[4px] border-r-[#555]" />
                  </div>
                  <div className="w-[135px] h-[15px] flex items-center justify-center bg-gradient-to-b from-[#f6f6f6] to-[#c8c8c8] border border-[#a0a0a0] rounded-[2px] text-[8px] leading-none text-[#555]">|||</div>
                  <div className="flex-1 flex justify-center">
                    <div className="w-0 h-0 border-y-[4px] border-y-transparent border-l-[4px] border-l-[#555]" />
                  </div>
                </div>
              </div>
              <div className="h-[131px] shrink-0 ml-[3px] mt-[3px] w-[193px] bg-[#f0f0f0] border border-[#aaa297]" />
              <div className="h-[2px] shrink-0 mt-[1px] bg-black" />
              <div className="mt-[1px] ml-[4px] w-[74px] h-[17px] shrink-0 bg-[#e6f0fc] rounded-b-[2px] text-[11.5px] leading-[17px] text-[#3f5470] px-[3px]">Построение</div>
            </div>

            <div className="w-[5px] shrink-0" />

            {/* 3D view */}
            <div className="flex-1 min-w-0 border-t-2 border-l-2 border-[#6e7b8b] bg-gradient-to-b from-[#6da3dd] to-white relative overflow-hidden">
              <svg viewBox="240 107 1037 521" width="1037" height="521" className="block" fill="none">
                <defs>
                  <linearGradient id="sky" gradientUnits="userSpaceOnUse" x1="0" y1="107" x2="0" y2="628">
                    <stop offset="0" stopColor="#6da3dd" />
                    <stop offset="1" stopColor="#fff" />
                  </linearGradient>
                  <linearGradient id="rim" gradientUnits="userSpaceOnUse" x1="0" y1="340" x2="0" y2="628">
                    <stop offset="0" stopColor="#6f6f6f" />
                    <stop offset=".55" stopColor="#808080" />
                    <stop offset="1" stopColor="#9c9c9c" />
                  </linearGradient>
                  <linearGradient id="bore" gradientUnits="userSpaceOnUse" x1="700" y1="417" x2="760" y2="584">
                    <stop offset="0" stopColor="#4d4d4d" />
                    <stop offset=".5" stopColor="#787878" />
                    <stop offset="1" stopColor="#c8c8c8" />
                  </linearGradient>
                </defs>
                <ellipse cx="672.500" cy="508" rx="193" ry="207" fill="url(#rim)" stroke="#111" />
                <ellipse cx="695.500" cy="500" rx="196.500" ry="202" transform="rotate(-3.500 695.500 500)" fill="#757575" stroke="#111" />
                <ellipse cx="695.500" cy="500.500" rx="81.500" ry="83.500" fill="url(#bore)" stroke="#111" strokeWidth="1.200" />
                <ellipse cx="685.500" cy="506.500" rx="71.500" ry="77.500" fill="url(#sky)" stroke="#111" strokeWidth="1.200" />
                {/* construction planes */}
                <path d="M617 410L782 425L776 593L608 577Z" stroke="#4a94c8" strokeWidth="2" />
                <path d="M638 477L801 494L754 524L590 507Z" stroke="#e8a0b4" strokeWidth="1.100" />
                <path d="M723 401L674 430L668 599L717 568Z" stroke="#b4e83a" strokeWidth="1.300" />
                <path d="M697 465L696 500" stroke="#e0708c" />
                <path d="M696 500L733 504" stroke="#a8e030" />
                <path d="M696 500L685 508" stroke="#4a94d8" />
                <path d="M676 504V522M667 513H686" stroke="#f020d0" strokeWidth="1.500" />
                <path d="M595 333C601 318 612 308 623 303C635 299 650 298 660 301L685 311" stroke="#2a2ab0" />
                {/* triad */}
                <path d="M285 583V562" stroke="#e01020" strokeWidth="4" />
                <path d="M285 553l4 11h-8z" fill="#e01020" />
                <path d="M285 584h22" stroke="#18b020" strokeWidth="3" />
                <path d="M315 585l-11-4v8z" fill="#18b020" />
                <path d="M285 584l-7 5" stroke="#1a70c0" strokeWidth="4" />
                <text x="282" y="551" fontSize="11" fill="#d83040" fontFamily="Liberation Sans">X</text>
                <text x="317" y="591" fontSize="12" fill="#30c060" fontFamily="Liberation Sans">Y</text>
                <text x="270" y="594" fontSize="12" fill="#2a80c8" fontFamily="Liberation Sans">Z</text>
                {/* mouse cursor */}
                <path d="M282 408v17l4-4 3 6 3-1-3-6h5z" fill="#fff" stroke="#555" />
              </svg>
            </div>

            {/* flyout */}
            <div className="absolute left-[27px] top-[229px] w-[297px] h-[26px] flex items-center pl-[7px] bg-gradient-to-b from-[#eaf2fd] to-[#bcd4f5] border-r border-b border-[#8a9ab0]">
              {Array.from({ length: 13 }, (_, i) => <Plane key={i} v={i} />)}
            </div>
          </div>

          {/* command line */}
          <div className="h-[69px] shrink-0 flex pt-[8px] bg-[#bcd6f8]">
            <div className="ml-[28px] w-[3px] h-[56px] bg-[radial-gradient(circle,#e4eefc_1px,transparent_1px)] bg-[length:3px_4px]" />
            <div className="ml-[2px] w-[1230px] h-[35px] border border-[#8b9098] border-b-2 border-b-black bg-[linear-gradient(180deg,#dfeafb,#e6effd_25%,#c6dbf9_82%,#e4ecf8)]" />
          </div>

          {/* status bar */}
          <div className="h-[20px] shrink-0 flex items-center border-t border-[#8b9098] bg-gradient-to-b from-[#d9e8fb] to-[#b5cff3]">
            <span className="ml-[7px] text-[11.85px] text-[#2f4565] whitespace-nowrap">Щелкните левой кнопкой мыши на объекте для его выделения (вместе с Ctrl - добавить к выделенным)</span>
            <div className="ml-auto w-[105px] h-full flex border-l border-[#e4eefc]">
              <div className="flex-1 border-r border-[#e4eefc]" />
              <div className="w-[19px] relative">
                <div className="absolute right-0 bottom-0 w-[12px] h-[12px] bg-[radial-gradient(circle,#3a4a60_1px,transparent_1px)] bg-[length:4px_4px]" />
              </div>
            </div>
          </div>
        </div>
        <div className="w-[3px] shrink-0 bg-[#d6b173]" />
      </div>
      <div className="h-[3px] shrink-0 bg-[#c9a35f]" />
    </div>
  );
}
